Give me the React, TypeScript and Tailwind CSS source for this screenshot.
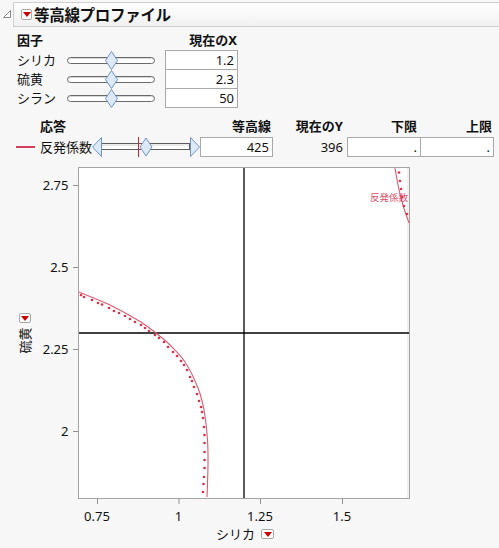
import React from "react";

type Pt = [number, number];

function smoothPath(pts: Pt[]): string {
  let d = `M${pts[0][0]},${pts[0][1]}`;
  for (let i = 0; i < pts.length - 1; i++) {
    const p0 = pts[i - 1] || pts[i];
    const p1 = pts[i];
    const p2 = pts[i + 1];
    const p3 = pts[i + 2] || p2;
    const c1x = p1[0] + (p2[0] - p0[0]) / 6;
    const c1y = p1[1] + (p2[1] - p0[1]) / 6;
    const c2x = p2[0] - (p3[0] - p1[0]) / 6;
    const c2y = p2[1] - (p3[1] - p1[1]) / 6;
    d += ` C${c1x.toFixed(2)},${c1y.toFixed(2)} ${c2x.toFixed(2)},${c2y.toFixed(2)} ${p2[0]},${p2[1]}`;
  }
  return d;
}

const solidA: Pt[] = [
  [79, 292],
  [110, 305],
  [140, 321.5],
  [156, 333],
  [170, 345],
  [185, 362],
  [198, 388],
  [204, 410],
  [207.5, 440],
  [208, 465],
  [207, 497],
];

const dotsA: Pt[] = [
  [81, 295], [84, 297], [92, 300], [98, 303], [102, 304.5], [109, 308], [114, 311],
  [119, 313], [125, 316], [130, 319], [135, 322], [141, 325], [145, 328], [149, 331],
  [155, 335], [159, 338], [164, 342], [168, 347], [173, 352], [177, 356], [181, 361],
  [184, 365], [187, 370], [190, 377], [192, 381], [194, 387], [197, 394], [199, 401],
  [201, 407], [202, 412], [203, 418], [204, 427], [204.5, 435], [204.5, 443], [204.5, 452],
  [204.5, 460], [204.5, 468], [204, 477], [203.5, 484], [203, 492],
];

const solidB: Pt[] = [
  [395, 168],
  [398, 185],
  [401, 198],
  [404.5, 210],
  [409, 223],
];

const dotsB: Pt[] = [
  [399, 172.5], [400, 181], [401, 189], [402, 197], [404, 206], [407, 214],
];

function RedButton({ className = "" }: { className?: string }) {
  return (
    <span
      className={
        "inline-flex items-center justify-center bg-white border border-[#a8a8a8] rounded-[2px] shrink-0 " +
        className
      }
    >
      <svg width="8" height="5" viewBox="0 0 8 5">
        <path d="M0 0 L8 0 L4 5 Z" fill="#c80000" />
      </svg>
    </span>
  );
}

function FactorSlider() {
  return (
    <div className="relative w-[88px] h-[20px] flex items-center">
      <div className="w-full h-[7px] rounded-full border border-[#6a6a6a] bg-white shadow-[inset_0_1px_0_#d8d8d8]" />
      <svg
        width="13"
        height="19"
        viewBox="0 0 13 19"
        className="absolute left-[38px] top-[0.5px]"
      >
        <path
          d="M6.5 0.5 L12.5 9.5 L6.5 18.5 L0.5 9.5 Z"
          fill="#dde9f9"
          stroke="#7093c4"
          strokeWidth="1"
        />
      </svg>
    </div>
  );
}

function ResponseSlider() {
  return (
    <svg width="108" height="20" viewBox="0 0 108 20" className="shrink-0">
      <rect x="9.5" y="6.5" width="88" height="6" fill="#ffffff" stroke="#5c5c5c" strokeWidth="1" />
      <line x1="10" y1="8" x2="97" y2="8" stroke="#d4d4d4" strokeWidth="1" />
      <path d="M9.5 0.5 L0.5 10 L9.5 19.5 Z" fill="#dde9f9" stroke="#7093c4" strokeWidth="1" />
      <path d="M98.5 0.5 L107.5 10 L98.5 19.5 Z" fill="#dde9f9" stroke="#7093c4" strokeWidth="1" />
      <line x1="46.5" y1="0" x2="46.5" y2="20" stroke="#d42030" strokeWidth="1" />
      <path d="M54 1 L60 10 L54 19 L48 10 Z" fill="#dde9f9" stroke="#7093c4" strokeWidth="1" />
    </svg>
  );
}

function ValueBox({ value, className = "" }: { value: string; className?: string }) {
  return (
    <div
      className={
        "h-[20px] border border-[#a8a8a8] bg-white flex items-center justify-end pr-[3px] text-[13px] leading-none " +
        className
      }
    >
      {value}
    </div>
  );
}

function Plot() {
  const yTicks: [number, string][] = [
    [185, "2.75"],
    [267, "2.5"],
    [349, "2.25"],
    [431, "2"],
  ];
  const xTicks: [number, string][] = [
    [97, "0.75"],
    [178.5, "1"],
    [260, "1.25"],
    [342, "1.5"],
  ];
  return (
    <svg width="384" height="365" viewBox="36 160 384 365" className="shrink-0">
      <rect x="78.5" y="167.5" width="331" height="331" fill="#ffffff" stroke="#a4a4a4" strokeWidth="1" />
      <line x1="408" y1="168" x2="408" y2="498" stroke="#efefef" strokeWidth="2" />
      {yTicks.map(([y, t]) => (
        <g key={t}>
          <line x1="73" y1={y + 0.5} x2="78" y2={y + 0.5} stroke="#909090" strokeWidth="1" />
          <text
            x="68.5"
            y={y + 5}
            textAnchor="end"
            fontSize="13"
            fill="#111"
            fontFamily="'Noto Sans', 'Noto Sans CJK JP', sans-serif"
          >
            {t}
          </text>
        </g>
      ))}
      {xTicks.map(([x, t]) => (
        <g key={t}>
          <line x1={x + 0.5} y1="499" x2={x + 0.5} y2="504" stroke="#909090" strokeWidth="1" />
          <text
            x={x}
            y="521"
            textAnchor="middle"
            fontSize="13"
            fill="#111"
            fontFamily="'Noto Sans', 'Noto Sans CJK JP', sans-serif"
          >
            {t}
          </text>
        </g>
      ))}
      {/* crosshair */}
      <line x1="244" y1="168" x2="244" y2="498" stroke="#000" strokeWidth="1.3" />
      <line x1="79" y1="333" x2="409" y2="333" stroke="#000" strokeWidth="1.3" />
      {/* contour curves */}
      <path d={smoothPath(solidA)} fill="none" stroke="#dd5a70" strokeWidth="1.1" />
      {dotsA.map(([x, y], i) => (
        <circle key={"a" + i} cx={x} cy={y} r="1.35" fill="#d3354f" />
      ))}
      <path d={smoothPath(solidB)} fill="none" stroke="#dd5a70" strokeWidth="1.1" />
      {dotsB.map(([x, y], i) => (
        <circle key={"b" + i} cx={x} cy={y} r="1.35" fill="#d3354f" />
      ))}
      <text
        x="370"
        y="201"
        fontSize="9.5"
        fill="#d8506a"
        fontFamily="'Noto Sans CJK JP', sans-serif"
      >
        反発係数
      </text>
    </svg>
  );
}

export default function App() {
  return (
    <div className="w-[499px] h-[548px] overflow-hidden bg-[#f7f7f7] text-[#111] text-[13px] font-['Noto_Sans','Noto_Sans_CJK_JP',sans-serif]">
      {/* Title bar */}
      <div className="flex items-start pt-[2px]">
        <svg width="13" height="24" viewBox="0 0 13 24" className="shrink-0">
          <path d="M3.5 15.5 L10.5 15.5 L10.5 8.5 Z" fill="#ffffff" stroke="#8a8a8a" strokeWidth="1" />
        </svg>
        <div className="flex-1 -mr-px h-[25px] border border-[#cfcfcf] bg-gradient-to-b from-white to-[#f0f0f0] flex items-center pl-[7px] gap-[2px]">
          <RedButton className="w-[11px] h-[11px]" />
          <span className="text-[15.5px] font-bold leading-none tracking-[-0.3px] font-['Noto_Sans_CJK_JP',sans-serif]">
            等高線プロファイル
          </span>
        </div>
      </div>

      {/* Factors */}
      <div className="pl-[17px] mt-[3px]">
        <div className="flex h-[20px] items-center font-bold">
          <span className="w-[148px] leading-none">因子</span>
          <span className="w-[73px] text-right pr-[1px] leading-none">現在のX</span>
        </div>
        {[
          ["シリカ", "1.2"],
          ["硫黄", "2.3"],
          ["シラン", "50"],
        ].map(([label, v], i) => (
          <div key={label} className={"flex items-center h-[20px] " + (i > 0 ? "-mt-px" : "")}>
            <span className="w-[50px] leading-none">{label}</span>
            <FactorSlider />
            <span className="w-[10px]" />
            <ValueBox value={v} className="w-[73px]" />
          </div>
        ))}
      </div>

      {/* Response header */}
      <div className="flex items-center h-[20px] mt-[8px] font-bold leading-none">
        <span className="w-[200px] pl-[40px]">応答</span>
        <span className="w-[73px] text-right pr-[2px]">等高線</span>
        <span className="w-[74px] text-right pr-[4px]">現在のY</span>
        <span className="w-[74px] text-right pr-[4px]">下限</span>
        <span className="w-[74px] text-right pr-[3px]">上限</span>
      </div>

      {/* Response row */}
      <div className="flex items-center h-[20px] mt-[1px]">
        <span className="ml-[16px] w-[19px] h-[2px] bg-[#d0405a]" />
        <span className="w-[57px] pl-[5px] leading-none whitespace-nowrap">反発係数</span>
        <ResponseSlider />
        <ValueBox value="425" className="w-[73px]" />
        <span className="w-[74px] text-right pr-[4px] leading-none">396</span>
        <ValueBox value="." className="w-[74px]" />
        <ValueBox value="." className="w-[74px] -ml-px" />
      </div>

      {/* Plot */}
      <div className="flex mt-[3px]">
        <div className="w-[36px] h-[346px] flex flex-col items-center justify-center pl-[13px] gap-[4px]">
          <RedButton className="w-[12px] h-[10px]" />
          <div className="w-[14px] h-[26px] flex items-center justify-center">
            <span className="-rotate-90 whitespace-nowrap leading-none">硫黄</span>
          </div>
        </div>
        <Plot />
      </div>

      {/* X axis title */}
      <div className="ml-[78px] w-[332px] flex items-center justify-center gap-[6px] h-[20px] -mt-[1px]">
        <span className="leading-none pl-[2px]">シリカ</span>
        <RedButton className="w-[13px] h-[10px]" />
      </div>
    </div>
  );
}
